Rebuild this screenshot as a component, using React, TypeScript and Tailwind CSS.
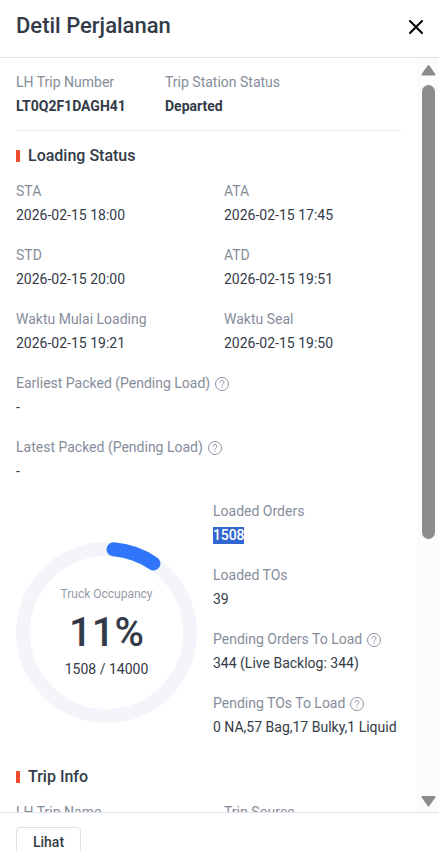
import React from 'react';

interface FieldProps {
  label: string;
  hint?: boolean;
  strong?: boolean;
  children?: React.ReactNode;
}

const RING_RADIUS = 83.5;

function pointOnRing(deg: number) {
  const rad = (deg * Math.PI) / 180;
  return `${90.5 + RING_RADIUS * Math.sin(rad)} ${90.5 - RING_RADIUS * Math.cos(rad)}`;
}

export default function App() {
  return (
    <div className="flex h-[851px] w-full flex-col overflow-hidden bg-white font-['Roboto',sans-serif] text-sm text-[#333b48]">
      <header className="flex h-[58px] shrink-0 items-start justify-between border-b border-[#e0e1ea] pl-4 pr-4">
        <h1 className="pt-2.5 text-[22px] font-medium leading-8">Detil Perjalanan</h1>
        <button className="pt-5" aria-label="Close">
          <svg width="14" height="14" viewBox="0 0 14 14" fill="none" stroke="#000" strokeWidth="2" strokeLinecap="round">
            <path d="M1 1l12 12M13 1L1 13" />
          </svg>
        </button>
      </header>

      <div className="flex min-h-0 flex-1">
        <main className="min-w-0 flex-1 overflow-hidden pl-4 pt-3">
          <div className="mr-4 flex h-[61px] border-b border-[#e9eaf2]">
            <div className="w-[149px]">
              <Field label="LH Trip Number" strong>LT0Q2F1DAGH41</Field>
            </div>
            <Field label="Trip Station Status" strong>Departed</Field>
          </div>

          <SectionTitle className="mt-[13px]">Loading Status</SectionTitle>
          <div className="mt-[11px] grid grid-cols-[208px_1fr] gap-y-4">
            <Field label="STA">2026-02-15 18:00</Field>
            <Field label="ATA">2026-02-15 17:45</Field>
            <Field label="STD">2026-02-15 20:00</Field>
            <Field label="ATD">2026-02-15 19:51</Field>
            <Field label="Waktu Mulai Loading">2026-02-15 19:21</Field>
            <Field label="Waktu Seal">2026-02-15 19:50</Field>
          </div>
          <div className="mt-4 flex flex-col gap-4">
            <Field label="Earliest Packed (Pending Load)" hint>-</Field>
            <Field label="Latest Packed (Pending Load)" hint>-</Field>
          </div>

          <div className="mt-4 flex gap-4">
            <OccupancyRing />
            <div className="flex flex-col gap-4 whitespace-nowrap">
              <Field label="Loaded Orders">
                <span className="mt-1 block h-[17px] w-[31px] bg-[#3367d1] font-medium leading-4 tracking-[-0.1px] text-white">1508</span>
              </Field>
              <Field label="Loaded TOs">39</Field>
              <Field label="Pending Orders To Load" hint>344 (Live Backlog: 344)</Field>
              <Field label="Pending TOs To Load" hint>0 NA,57 Bag,17 Bulky,1 Liquid</Field>
            </div>
          </div>

          <SectionTitle className="mt-[26px]">Trip Info</SectionTitle>
          <div className="mt-[11px] grid grid-cols-[208px_1fr]">
            <Field label="LH Trip Name" />
            <Field label="Trip Source" />
          </div>
        </main>
        <Scrollbar />
      </div>

      <footer className="h-[39px] shrink-0 border-t border-[#e0e1ea] px-4 pt-3.5">
        <button className="h-8 w-[65px] rounded border border-[#dddfea] pb-0.5 font-medium leading-[28px]">
          Lihat
        </button>
      </footer>
    </div>
  );
}

function Field({ label, hint, strong, children }: FieldProps) {
  return (
    <div className="leading-6">
      <div className="flex items-center text-[#858d9a]">
        {label}
        {hint && <HelpIcon />}
      </div>
      <div className={strong ? 'flow-root h-6 font-bold' : 'flow-root h-6'}>{children}</div>
    </div>
  );
}

function SectionTitle({ className, children }: { className: string; children: React.ReactNode }) {
  return (
    <div className={`flex h-6 items-center gap-2 ${className}`}>
      <span className="h-3 w-1 bg-[#ee4d2d]" />
      <h2 className="text-base font-medium">{children}</h2>
    </div>
  );
}

function HelpIcon() {
  return (
    <svg className="ml-[5px] mt-px" width="14" height="14" viewBox="0 0 14 14" fill="none" stroke="#8d94a0">
      <circle cx="7" cy="7" r="6.5" />
      <path d="M5 5.4a2 1.8 0 1 1 3.1 1.4c-.7.5-1.1.8-1.1 1.7M7 9.6v1.2" />
    </svg>
  );
}

function OccupancyRing() {
  return (
    <div className="mt-[43px] grid size-[181px] shrink-0">
      <svg className="col-start-1 row-start-1" width="181" height="181" viewBox="0 0 181 181" fill="none" strokeWidth="14">
        <circle cx="90.5" cy="90.5" r={RING_RADIUS} stroke="#f4f5fa" />
        <path
          d={`M${pointOnRing(4.8)}A${RING_RADIUS} ${RING_RADIUS} 0 0 1 ${pointOnRing(34.2)}`}
          stroke="#3176fa"
          strokeLinecap="round"
        />
      </svg>
      <div className="col-start-1 row-start-1 flex flex-col items-center pt-11">
        <span className="text-xs leading-4 text-[#969ba5]">Truck Occupancy</span>
        <span className="mt-[7px] text-[40px] font-medium leading-[48px]">11%</span>
        <span className="mt-0.5 leading-5">1508 / 14000</span>
      </div>
    </div>
  );
}

function Scrollbar() {
  return (
    <div className="flex w-[22px] shrink-0 flex-col items-center bg-[#fcfcfc] pb-[5px] pt-[7px]">
      <svg width="15" height="11" viewBox="0 0 15 11" fill="#8b8b8b" stroke="#8b8b8b" strokeWidth="2" strokeLinejoin="round">
        <path d="M7.5 1.2L13.5 9.5H1.5z" />
      </svg>
      <div className="mt-[9px] h-[454px] w-[13px] rounded-full bg-[#8b8b8b]" />
      <svg className="mt-auto" width="15" height="12" viewBox="0 0 15 12" fill="#8b8b8b" stroke="#8b8b8b" strokeWidth="2" strokeLinejoin="round">
        <path d="M7.5 10.5L13.5 2H1.5z" />
      </svg>
    </div>
  );
}
